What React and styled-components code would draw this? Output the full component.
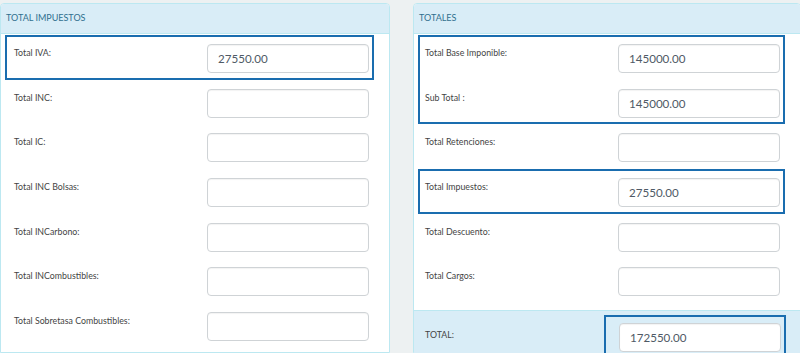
import React from 'react'
import styled, { createGlobalStyle } from 'styled-components'

const GlobalStyle = createGlobalStyle`
  html, body {
    margin: 0;
    padding: 0;
    background: #edf1f2;
    font-family: Lato, "Open Sans", sans-serif;
    overflow: hidden;
  }
`

const Page = styled.div`
  display: flex;
  gap: 23px;
  padding-top: 3px;
  height: 350px;
`

const Panel = styled.div`
  width: ${(p) => p.width}px;
  flex-shrink: 0;
  display: flex;
  flex-direction: column;
  background: #ffffff;
  border: 1px solid #bce8f1;
  border-radius: 4px 4px 0 0;
  box-sizing: border-box;
`

const Heading = styled.div`
  flex-shrink: 0;
  height: 30px;
  box-sizing: border-box;
  padding: 8px 0 0 5px;
  background: #d9edf7;
  border-bottom: 1px solid #bce8f1;
  border-radius: 3px 3px 0 0;
  color: #31708f;
  font-size: 9px;
  line-height: 11px;
  text-transform: uppercase;
`

const Body = styled.div`
  flex-shrink: 0;
  padding: 1px ${(p) => p.right}px 7px 4px;
`

const Group = styled.div`
  outline: 2px solid #1a6daf;
  outline-offset: -2px;
`

const Row = styled.div`
  display: flex;
  justify-content: space-between;
  align-items: flex-start;
  height: 44.67px;
  box-sizing: border-box;
  padding: 0 5px 0 ${(p) => p.indent}px;
  outline: ${(p) => (p.highlight ? '2px solid #1a6daf' : 'none')};
  outline-offset: -2px;
`

const Label = styled.div`
  padding-top: 12px;
  font-size: 8.8px;
  line-height: 11px;
  color: #444444;
`

const Field = styled.div`
  width: 162px;
  height: 29px;
  margin-top: 9px;
  box-sizing: border-box;
  padding-left: 10px;
  border: 1px solid #cfd3d6;
  border-radius: 4px;
  background: #ffffff;
  box-shadow: inset 0 1px 1px rgba(0, 0, 0, 0.05);
  color: #4f5a66;
  font-size: 11.6px;
  line-height: 27px;
`

const Footer = styled.div`
  flex: 1;
  display: flex;
  justify-content: space-between;
  align-items: flex-start;
  padding: 4px 14px 0 11px;
  background: #d9edf7;
  border-top: 1px solid #bce8f1;
`

const FooterLabel = styled(Label)`
  padding-top: 14px;
`

const FooterBox = styled.div`
  padding: 8px 5px 8px 15px;
  outline: 2px solid #1a6daf;
  outline-offset: -2px;
  & > div {
    margin-top: 0;
  }
`

const Line = ({ label, value, highlight, indent }) => (
  <Row highlight={highlight} indent={indent}>
    <Label>{label}</Label>
    <Field>{value}</Field>
  </Row>
)

export default function App() {
  return (
    <>
      <GlobalStyle />
      <Page>
        <Panel width={390}>
          <Heading>Total Impuestos</Heading>
          <Body right={15}>
            <Line indent={9} label="Total IVA:" value="27550.00" highlight />
            <Line indent={9} label="Total INC:" />
            <Line indent={9} label="Total IC:" />
            <Line indent={9} label="Total INC Bolsas:" />
            <Line indent={9} label="Total INCarbono:" />
            <Line indent={9} label="Total INCombustibles:" />
            <Line indent={9} label="Total Sobretasa Combustibles:" />
          </Body>
        </Panel>
        <Panel width={388}>
          <Heading>Totales</Heading>
          <Body right={15}>
            <Group>
              <Line indent={7} label="Total Base Imponible:" value="145000.00" />
              <Line indent={7} label="Sub Total :" value="145000.00" />
            </Group>
            <Line indent={7} label="Total Retenciones:" />
            <Line indent={7} label="Total Impuestos:" value="27550.00" highlight />
            <Line indent={7} label="Total Descuento:" />
            <Line indent={7} label="Total Cargos:" />
          </Body>
          <Footer>
            <FooterLabel>TOTAL:</FooterLabel>
            <FooterBox>
              <Field>172550.00</Field>
            </FooterBox>
          </Footer>
        </Panel>
      </Page>
    </>
  )
}
